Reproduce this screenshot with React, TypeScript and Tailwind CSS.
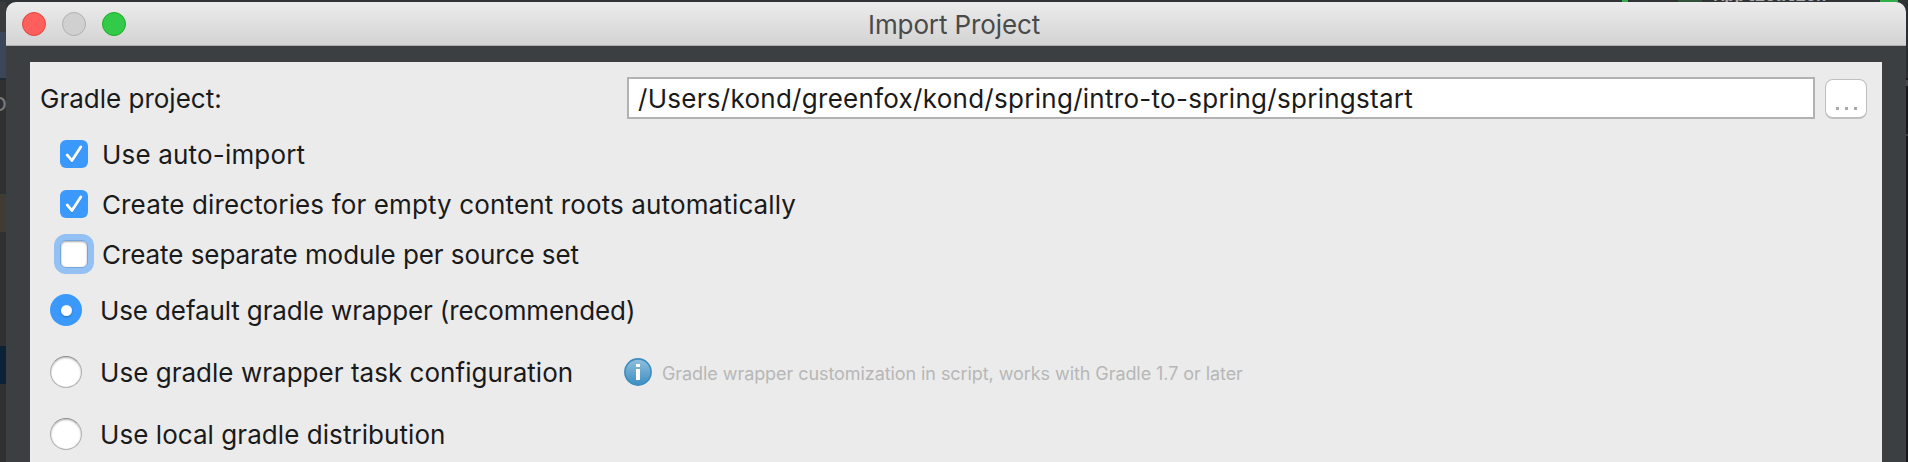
import type { ReactNode } from "react";

function Check() {
  return (
    <span className="flex h-7 w-7 shrink-0 items-center justify-center rounded-md bg-[#3b99fc]">
      <svg viewBox="0 0 28 28" className="h-7 w-7" fill="none">
        <path d="M7.2 15.4 L12 21 L20.8 7.2" stroke="#2a78cc" strokeOpacity="0.5" strokeWidth="2.6" strokeLinecap="round" strokeLinejoin="round" transform="translate(0 .8)" />
        <path d="M7.2 15 L12 20.6 L20.8 7" stroke="#fff" strokeWidth="2.8" strokeLinecap="round" strokeLinejoin="round" />
      </svg>
    </span>
  );
}

function CheckRow({ checked, children }: { checked?: boolean; children: ReactNode }) {
  return (
    <label className="flex h-[50px] items-center pl-[30px]">
      {checked ? (
        <Check />
      ) : (
        <span className="h-7 w-7 shrink-0 rounded-md border border-[#74a5dc] bg-white shadow-[0_0_0_6px_#94c1f3,inset_0_1px_2px_#aaaaaa]" />
      )}
      <span className="ml-[14px] pt-0.5 leading-8 whitespace-pre">{children}</span>
    </label>
  );
}

function RadioRow({ checked, children }: { checked?: boolean; children: ReactNode }) {
  return (
    <div className="flex h-[62px] items-center pl-5">
      {checked ? (
        <span className="flex h-8 w-8 shrink-0 items-center justify-center rounded-full bg-[#3b99fc]">
          <span className="h-[11px] w-[11px] rounded-full bg-white shadow-[0_1px_2px_#1f6fc4]" />
        </span>
      ) : (
        <span className="h-8 w-8 shrink-0 rounded-full border border-[#b0b0b0] border-t-[#8c8c8c] bg-white shadow-[inset_0_1px_2px_#b5b5b5]" />
      )}
      {children}
    </div>
  );
}

function EditorTop() {
  return (
    <div className="flex h-0.5 w-full shrink-0 overflow-hidden bg-[#303335] pl-[1622px]">
      <span className="h-0.5 w-1.5 bg-[#2fae4a]" />
      <span className="ml-[50px] h-0.5 w-6 bg-[#2f5238]" />
      <span className="ml-3 h-0.5 w-[112px] overflow-hidden">
        <span className="-mt-[14px] block font-['Liberation_Mono',monospace] text-[17px] leading-[22px] font-bold text-[#a5a7a8]">Application</span>
      </span>
      <span className="ml-[54px] h-0.5 w-[18px] bg-[#2fae4a]" />
    </div>
  );
}

function EditorLeft() {
  return (
    <div className="flex w-1.5 shrink-0 flex-col overflow-hidden bg-[#2f3031]">
      <span className="h-[30px] shrink-0 bg-[#393b3c]" />
      <span className="h-[46px] shrink-0 bg-[#3b4759]" />
      <span className="h-0.5 shrink-0 bg-[#222a36]" />
      <span className="-ml-2 h-[114px] shrink-0 pt-2 text-[25px] leading-7 text-[#77797a]">o</span>
      <span className="h-[38px] shrink-0 bg-[#403c33]" />
      <span className="h-[114px] shrink-0" />
      <span className="h-[38px] shrink-0 bg-[#0b2236]" />
    </div>
  );
}

function EditorRight() {
  return (
    <div className="flex w-0.5 shrink-0 flex-col bg-[#17191a]">
      <span className="h-[76px] bg-[#2b2e30]" />
      <span className="h-0.5 bg-[#17191a]" />
      <span className="h-1.5 bg-[#45484a]" />
      <span className="mt-12 h-0.5 bg-[#3a3d3f]" />
    </div>
  );
}

export default function App() {
  return (
    <div className="flex h-[462px] w-[1908px] flex-col overflow-hidden bg-[#303335] font-['Inter',sans-serif] text-[26px] text-[#1a1a1a]">
      <EditorTop />
      <div className="flex min-h-0 flex-1">
        <EditorLeft />
        <div className="flex w-[1900px] shrink-0 flex-col overflow-hidden rounded-t-[10px] bg-[#3c3f41]">
          <header className="flex h-11 shrink-0 items-center border-b border-[#aeaeae] bg-linear-to-b from-[#ececec] to-[#d3d3d3] pt-px pl-4">
            <div className="flex w-[846px] gap-4">
              <span className="h-6 w-6 rounded-full border border-[#e2463f] bg-[#fd605c]" />
              <span className="h-6 w-6 rounded-full border border-[#b0b0b0] bg-[#d0d0d0]" />
              <span className="h-6 w-6 rounded-full border border-[#1dac2d] bg-[#34ca49]" />
            </div>
            <h1 className="pt-0.5 leading-8 tracking-[-0.1px] whitespace-pre text-[#4a4a4a]">Import Project</h1>
          </header>
          <main className="mx-6 mt-4 flex flex-1 flex-col bg-[#ebebeb]">
            <div className="flex h-[67px] shrink-0 items-start pt-[15px] pl-2.5">
              <span className="w-[587px] pt-1.5 leading-8 whitespace-pre">Gradle project:</span>
              <div className="h-[42px] w-[1188px] border-2 border-[#b2b2b2] bg-white pt-1 pl-[9px] leading-8 tracking-[0.28px] whitespace-pre">
                /Users/kond/greenfox/kond/spring/intro-to-spring/springstart
              </div>
              <button className="mt-0.5 ml-2.5 flex h-10 w-[42px] items-start justify-center gap-1.5 rounded-lg border border-b-2 border-[#bfbfbf] bg-white pt-[27px]">
                <i className="h-[3px] w-[3px] bg-[#a9a9a9]" />
                <i className="h-[3px] w-[3px] bg-[#a9a9a9]" />
                <i className="h-[3px] w-[3px] bg-[#a9a9a9]" />
              </button>
            </div>
            <CheckRow checked><span className="tracking-[0.18px]">Use auto-import</span></CheckRow>
            <CheckRow checked><span className="tracking-[0.13px]">Create directories for empty content roots automatically</span></CheckRow>
            <CheckRow><span className="tracking-[-0.06px]">Create separate module per source set</span></CheckRow>
            <RadioRow checked>
              <span className="ml-[18px] pt-0.5 leading-8 tracking-[-0.12px] whitespace-pre">Use default gradle wrapper (recommended)</span>
            </RadioRow>
            <RadioRow>
              <span className="ml-[18px] w-[524px] pt-0.5 leading-8 tracking-[0.03px] whitespace-pre">Use gradle wrapper task configuration</span>
              <svg viewBox="0 0 28 28" className="h-7 w-7">
                <defs>
                  <linearGradient id="info" x1="0" y1="0" x2="0" y2="1">
                    <stop offset="0" stopColor="#92c0dc" />
                    <stop offset="1" stopColor="#3d8ec2" />
                  </linearGradient>
                </defs>
                <circle cx="14" cy="14" r="13.1" fill="url(#info)" stroke="#3c8cbe" strokeWidth="1.6" />
                <path d="M12 6h4v3h-4zM12 11h4v11h-4z" fill="#fff" />
              </svg>
              <span className="ml-2.5 pt-1 text-lg tracking-[-0.07px] whitespace-pre text-[#b7b7b7]">Gradle wrapper customization in script, works with Gradle 1.7 or later</span>
            </RadioRow>
            <RadioRow>
              <span className="ml-[18px] pt-0.5 leading-8 tracking-[0.06px] whitespace-pre">Use local gradle distribution</span>
            </RadioRow>
          </main>
        </div>
        <EditorRight />
      </div>
    </div>
  );
}
